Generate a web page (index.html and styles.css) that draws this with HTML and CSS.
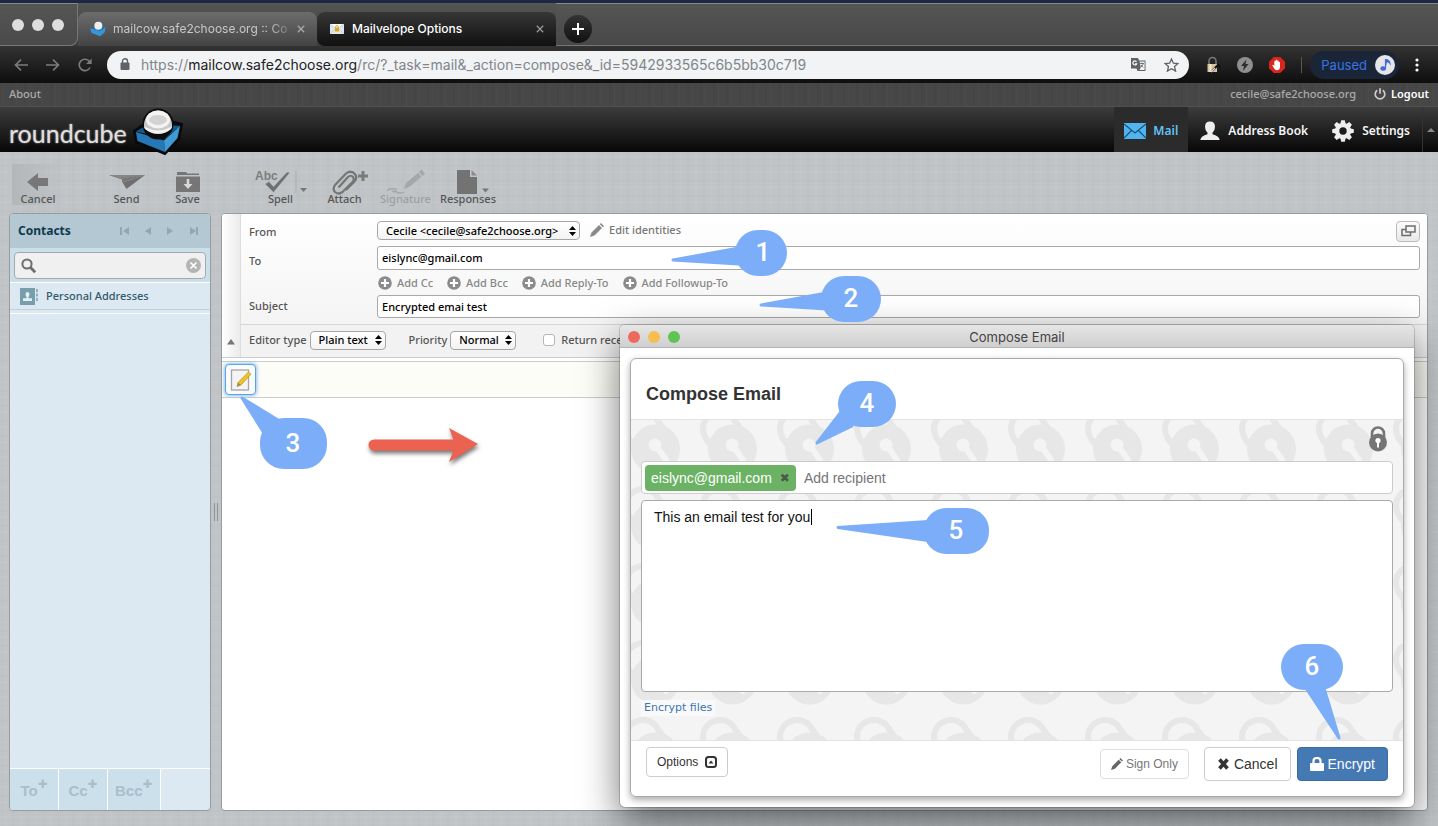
FILE: index.html
```html
<!DOCTYPE html>
<html lang="en">
<head>
<meta charset="utf-8">
<title>Roundcube compose with Mailvelope</title>
<link rel="stylesheet" href="styles.css">
</head>
<body>
<div class="screen">
  <header class="browser">
    <div class="tabstrip">
      <div class="lights"><span></span><span></span><span></span></div>
      <div class="tab tab-active">
        <svg class="fav" width="16" height="16" viewBox="0 0 48 48"><path d="M1 22L24 14 47 18 44 34 30 46 4 35z" fill="#1c6fa8"/><path d="M1 22L30 30 47 18 44 34 30 46 4 35z" fill="#3b95d2"/><circle cx="25" cy="14" r="12" fill="#eee"/></svg>
        <span class="tab-title">mailcow.safe2choose.org :: Co</span>
        <button class="tab-x" aria-label="Close tab"><svg width="8" height="8" viewBox="0 0 10 10"><path d="M1 1l8 8M9 1l-8 8" stroke="#aaa" stroke-width="1.6"/></svg></button>
      </div>
      <div class="tab tab-dark">
        <svg class="fav" width="16" height="16" viewBox="0 0 16 16"><path d="M1 3h14v10H1z" fill="#dfe7f0"/><path d="M1 3l7 5 7-5" fill="#fff" stroke="#b9c4d2" stroke-width=".7"/><path d="M1 13l5-5M15 13l-5-5" stroke="#b9c4d2" stroke-width=".7"/><rect x="6" y="6.500" width="4" height="4" fill="#e0a81c"/><path d="M6.700 6.500V5.300q1.300-1.500 2.600 0v1.200" stroke="#d9a400" fill="none"/></svg>
        <span class="tab-title">Mailvelope Options</span>
        <button class="tab-x" aria-label="Close tab"><svg width="8" height="8" viewBox="0 0 10 10"><path d="M1 1l8 8M9 1l-8 8" stroke="#999" stroke-width="1.600"/></svg></button>
      </div>
      <div class="strip-end"><button class="newtab" aria-label="New tab"><svg width="12" height="12" viewBox="0 0 12 12"><path d="M6 0v12M0 6h12" stroke="#fff" stroke-width="2"/></svg></button></div>
    </div>
    <div class="navrow">
      <div class="navbtns">
        <button aria-label="Back"><svg width="14" height="12" viewBox="0 0 14 12"><path d="M14 6H1.500M7 .7L1.500 6 7 11.300" fill="none" stroke="#7c7c7c" stroke-width="1.600"/></svg></button>
        <button aria-label="Forward"><svg width="14" height="12" viewBox="0 0 14 12"><path d="M0 6h12.500M7 .7L12.500 6 7 11.300" fill="none" stroke="#7c7c7c" stroke-width="1.600"/></svg></button>
        <button aria-label="Reload"><svg width="14" height="14" viewBox="0 0 14 14"><path d="M12 9.500A5.700 5.700 0 1 1 11.500 3.500" fill="none" stroke="#7c7c7c" stroke-width="1.600"/><path d="M13.700.5v5.600H8.100z" fill="#7c7c7c"/></svg></button>
      </div>
      <div class="omnibox">
        <svg width="10" height="13" viewBox="0 0 10 13"><rect x=".5" y="4.500" width="9" height="7.500" rx="1" fill="#5f6368"/><path d="M2.500 5V3.200a2.500 2.500 0 0 1 5 0V5" fill="none" stroke="#5f6368" stroke-width="1.400"/></svg>
        <span class="url">https://<b>mailcow.safe2choose.org</b>/rc/?_task=mail&amp;_action=compose&amp;_id=5942933565c6b5bb30c719</span>
        <svg width="15" height="15" viewBox="0 0 15 15"><path d="M0 1h7l1 2.500h6.500V14H6.500L5.500 11.500H0z" fill="#5f6368"/><path d="M8.600 4.500h5V13H8.300l1.500-2.200z" fill="#f1f3f4"/><path d="M5.500 4.800A2 2 0 1 0 5.700 6.800H4" fill="none" stroke="#fff" stroke-width="1.200"/><path d="M9 6.500h4M11 5.500v1M12.300 6.500q-.7 2.500-2.300 3.500M10 8l2.300 2.200" stroke="#5f6368" stroke-width=".8" fill="none"/></svg>
        <svg width="15" height="14" viewBox="0 0 15 14"><path d="M7.500 1l1.900 4.200 4.600.4-3.500 3 1.100 4.500-4.100-2.400-4.100 2.400 1.100-4.500-3.500-3 4.600-.4z" fill="none" stroke="#5f6368" stroke-width="1.300"/></svg>
      </div>
      <div class="exts">
        <svg width="16" height="18" viewBox="0 0 16 18"><path d="M4 8V5a3.500 3.500 0 0 1 7 0v3" fill="none" stroke="#777" stroke-width="1.600"/><rect x="2.500" y="8" width="9.500" height="8" fill="#d8c39a"/><path d="M4.500 8h2v8h-2z" fill="#f2e6c9"/><path d="M7 15l6-6 2.500 2.500" stroke="#111" stroke-width="2" fill="none"/><path d="M6 16l4-4" stroke="#ddd" stroke-width="1.500"/></svg>
        <svg width="16" height="16" viewBox="0 0 16 16"><circle cx="8" cy="8" r="8" fill="#8f8f8f"/><path d="M9.500 2.500L4 9h3l-1 5 5.500-7h-3z" fill="#2c2c2c"/></svg>
        <svg width="16" height="16" viewBox="0 0 16 16"><path d="M4.700 0h6.600L16 4.700v6.600L11.300 16H4.700L0 11.300V4.700z" fill="#d9261c"/><path d="M4 7.800l1.300 1V4.300q.7-.9 1.300 0V3q.8-.9 1.500 0v.8q.8-.8 1.500 0v1.400q.8-.7 1.400 0V10q-.3 3.200-3 3.200-2.200 0-3-2L3.300 8.500q.2-.9.700-.7z" fill="#fff"/></svg>
        <i class="vbar"></i>
        <span class="paused">Paused <svg width="20" height="20" viewBox="0 0 20 20"><circle cx="10" cy="10" r="10" fill="#e6e6e8"/><path d="M10.500 13.500V4.500q4 0 4.500 4-1.500-2-3-1.500" fill="#4469d8" stroke="#4469d8" stroke-width="1.200"/><ellipse cx="8.200" cy="13.500" rx="2.800" ry="2.200" fill="#4469d8"/></svg></span>
        <svg width="4" height="14" viewBox="0 0 4 14"><circle cx="2" cy="2" r="1.600" fill="#fff"/><circle cx="2" cy="7" r="1.600" fill="#fff"/><circle cx="2" cy="12" r="1.600" fill="#fff"/></svg>
      </div>
    </div>
  </header>

  <div class="topline">
    <a class="about" href="#">About</a>
    <span class="user">cecile@safe2choose.org</span>
    <a class="logout" href="#"><svg width="12" height="12" viewBox="0 0 12 12"><path d="M3.200 2.200a4.800 4.800 0 1 0 5.600 0M6 .2v5.600" fill="none" stroke="#ccc" stroke-width="1.700"/></svg>Logout</a>
  </div>
  <div class="topnav">
    <div class="logo"><span>roundcube</span>
      <svg width="50" height="48" viewBox="0 0 50 48"><path d="M1 23L14 14 37 13 49 16 46 31 32 46 3 34z" fill="#0d1013" stroke="#07090b" stroke-width="2"/><path d="M3 23.500L16 16 47 18 33 30z" fill="#155a8c"/><path d="M3 24l28 8.500 1 11.500L4.500 33z" fill="#2678b4"/><path d="M31 32.500L47 18l-2.500 12L32 44z" fill="#3f9ad6"/><circle cx="25" cy="16" r="15.500" fill="#0b0c0d"/><path d="M11 17a14 14.500 0 0 1 28 0v3q-6 6-14 6t-14-6z" fill="#c9c9c9"/><ellipse cx="25" cy="11.500" rx="12" ry="9" fill="#f3f3f3"/><path d="M16 13q0-6 9-6t9 6q-4 4-9 4t-9-4z" fill="#d2d2d2"/><path d="M12 19q13 7 26 0v2q-12 9-26 0z" fill="#f4f4f4"/></svg>
    </div>
    <nav class="tasks">
      <a href="#" class="task on"><svg width="22" height="16" viewBox="0 0 22 16"><rect width="22" height="16" fill="#4fb4f0"/><path d="M0 1l11 9L22 1M0 15l7.500-7.500M22 15l-7.500-7.500" fill="none" stroke="#1c4f70" stroke-width="1.200"/></svg>Mail</a>
      <a href="#" class="task"><svg width="20" height="20" viewBox="0 0 20 20"><path d="M10 .5q5 0 5 5.200 0 4-2.500 6v1.600q6.500 1.500 7.200 5.700H.3q.7-4.200 7.200-5.700v-1.600Q5 9.700 5 5.700 5 .5 10 .5z" fill="#eee"/></svg>Address Book</a>
      <a href="#" class="task"><svg width="22" height="22" viewBox="-11 -11 22 22"><g fill="#eee"><circle r="8"/><path id="cog" d="M-1.800-10.800h3.600l.9 4h-5.400zM-1.800 10.800h3.600l.9-4h-5.400z"/><use href="#cog" transform="rotate(45)"/><use href="#cog" transform="rotate(90)"/><use href="#cog" transform="rotate(135)"/></g><circle r="3.700" fill="#1d1d1d"/></svg>Settings</a>
      <button class="collapse" aria-label="Collapse"><svg width="8" height="4" viewBox="0 0 8 4"><path d="M0 4l4-4 4 4z" fill="#888"/></svg></button>
    </nav>
  </div>

  <main class="page">
    <div class="toolbar">
      <button class="tool back"><span class="ico"><svg width="22" height="20" viewBox="0 0 22 20"><path d="M0 10L11 1v5h10v8H11v5z" fill="#777"/></svg></span>Cancel</button>
      <button class="tool gap-l"><span class="ico"><svg width="36" height="18" viewBox="0 0 36 18"><path d="M0 2h36L13 9.500V6.500z" fill="#777"/><path d="M36 2L17.500 16l-4-6.500z" fill="#6f6f6f"/><path d="M0 2l36 0-24 4z" fill="#858585"/></svg></span>Send</button>
      <button class="tool"><span class="ico"><svg width="24" height="21" viewBox="0 0 24 21"><path d="M1 4V1h9l1.500 1.500H23V4zM0 5.500h24V21H0z" fill="#767676"/><path d="M10.700 8h2.600v5h3.200L12 18l-4.500-5h3.200z" fill="#d6d9db"/></svg></span>Save</button>
      <button class="tool gap-l"><span class="ico"><svg width="52" height="28" viewBox="0 0 52 28"><text x="0" y="12" class="abc">Abc</text><path d="M10 16l4-2.500 4.500 5L32 4l3 .5L18.500 24.500z" fill="#6f6f6f" stroke="#c0c4c7" stroke-width=".6"/><path d="M41 3v22" stroke="#aaadaf"/><path d="M45 20h7l-3.500 4z" fill="#777"/></svg></span>Spell</button>
      <button class="tool gap-s"><span class="ico right"><svg width="38" height="26" viewBox="0 0 38 26"><path d="M7.500 18.500L17 8q2.800-2.500 5 0 1.700 2.500-.5 5L11.500 23q-4 3-7.500 0-3-3.500.5-7.500L15 4.500q4.500-3.500 8.500 0 3.500 4 0 8L15 21" fill="none" stroke="#757575" stroke-width="2.200"/><path d="M32 2v10M27 7h10" stroke="#7b7b7b" stroke-width="3"/></svg></span>Attach</button>
      <button class="tool" disabled><span class="ico"><svg width="38" height="26" viewBox="0 0 38 26"><g fill="#a4a7a9"><path d="M17 20l2-6L31 4l3.500 3.500-11.500 10zM32 3l2.500-2.500 3.500 4L35.500 7z"/></g><path d="M1 22q0-3 5-2 3-1 3 1-1 3-4 1M9 23q5 2 8 0" fill="none" stroke="#a4a7a9" stroke-width="1.500"/></svg></span>Signature</button>
      <button class="tool wide"><span class="ico right"><svg width="33" height="24" viewBox="0 0 33 24"><path d="M0 0h13v7h7v17H0z" fill="#737373"/><path d="M14.500 0l5.500 5.500h-5.500z" fill="#8b8b8b"/><path d="M25 18.500h7l-3.500 4z" fill="#777"/></svg></span>Responses</button>
    </div>

    <div class="columns">
      <aside class="contacts">
        <div class="c-head"><h2>Contacts</h2>
          <svg width="80" height="10" viewBox="0 0 80 10" fill="#90a8b4"><path d="M0 1h2v8H0zM9 1v8L3 5zM31 1v8L25 5zM47 1v8l6-4zM70 1v8l6-4zM76 1h2v8h-2z"/></svg>
        </div>
        <div class="c-search"><label class="sbox"><svg width="16" height="16" viewBox="0 0 16 16"><circle cx="6" cy="6" r="4.600" fill="none" stroke="#6d6d6d" stroke-width="2"/><path d="M9.500 9.500l4.700 4.700" stroke="#6d6d6d" stroke-width="2.800"/></svg><input type="text" aria-label="Search contacts"><svg width="15" height="15" viewBox="0 0 15 15"><circle cx="7.500" cy="7.500" r="7.500" fill="#b4b4b4"/><path d="M4.500 4.500l6 6M10.500 4.500l-6 6" stroke="#fff" stroke-width="1.700"/></svg></label></div>
        <a class="c-row" href="#"><svg width="19" height="17" viewBox="0 0 19 17"><path d="M0 0h15v17H0z" fill="#769eab"/><path d="M7.500 4q2 0 2 2.200 0 1.800-1 2.600v1.400h3.500V13h-9v-2.800h3.500V8.800q-1-.8-1-2.600Q5.500 4 7.500 4z" fill="#e3eff5"/><path d="M16 1h2v3h-2zM16 5.500h2v3h-2zM16 10h2v3h-2z" fill="#8fb1bd"/></svg>Personal Addresses</a>
        <div class="c-space"></div>
        <div class="c-foot"><button>To<sup>+</sup></button><button>Cc<sup>+</sup></button><button>Bcc<sup>+</sup></button></div>
      </aside>
      <div class="grip"></div>

      <section class="compose">
        <form class="headers">
          <div class="strip"><svg width="8" height="6" viewBox="0 0 8 6"><path d="M0 5.500L4 0l4 5.500z" fill="#777"/></svg></div>
          <div class="fields">
            <div class="grid">
              <label class="lab" for="from">From</label>
              <div class="fromrow"><span class="sel"><select id="from"><option>Cecile &lt;cecile@safe2choose.org&gt;</option></select><svg width="7" height="10" viewBox="0 0 7 10"><path d="M0 4l3.500-4L7 4zM0 6l3.500 4L7 6z"/></svg></span>
                <a href="#" class="edit"><svg width="14" height="14" viewBox="0 0 14 14"><path d="M0 14l1.500-4.500L9 2l3 3-7.500 7.500zM9.800 1.200L11 0l3 3-1.200 1.200z" fill="#8a8a8a"/></svg>Edit identities</a>
                <button type="button" class="detach" aria-label="Open in new window"><svg width="15" height="13" viewBox="0 0 15 13"><path d="M5 1h9v6H5zM5 4.500H1v6h8.500V7" fill="none" stroke="#6e6e6e" stroke-width="1.500"/></svg></button></div>
              <label class="lab lab-to" for="to">To</label>
              <input class="txt to" id="to" type="text" value="eislync@gmail.com">
              <div class="adds">
                <a href="#"><svg class="plus" width="14" height="14"><use href="#plus"/></svg>Add Cc</a>
                <a href="#"><svg class="plus" width="14" height="14"><use href="#plus"/></svg>Add Bcc</a>
                <a href="#"><svg class="plus" width="14" height="14"><use href="#plus"/></svg>Add Reply-To</a>
                <a href="#"><svg class="plus" width="14" height="14"><use href="#plus"/></svg>Add Followup-To</a>
              </div>
              <label class="lab" for="subject">Subject</label>
              <input class="txt" id="subject" type="text" value="Encrypted emai test">
            </div>
            <div class="opts">
              <label for="editor">Editor type</label><span class="sel"><select id="editor"><option>Plain text</option></select><svg width="7" height="10" viewBox="0 0 7 10"><path d="M0 4l3.500-4L7 4zM0 6l3.500 4L7 6z"/></svg></span>
              <label class="prio" for="prio">Priority</label><span class="sel"><select id="prio"><option>Normal</option></select><svg width="7" height="10" viewBox="0 0 7 10"><path d="M0 4l3.500-4L7 4zM0 6l3.500 4L7 6z"/></svg></span>
              <label class="rr"><input type="checkbox">Return receipt</label>
            </div>
          </div>
        </form>
        <div class="mvbar"><button aria-label="Compose with Mailvelope"><svg width="22" height="24" viewBox="0 0 22 24"><rect x="1.500" y="2" width="17" height="20" fill="#f4f4f4" stroke="#a5a5a5" stroke-width="1.300"/><path d="M7 18.500l1-4L18.500 4l2.500 2.200L11 17z" fill="#edc325" stroke="#c39a2c" stroke-width=".8"/><path d="M7 18.500l1-4 2.800 2.600z" fill="#a08a5a"/></svg></button></div>
      </section>
    </div>
  </main>

  <section class="window">
    <div class="titlebar"><span class="dot r"></span><span class="dot y"></span><span class="dot g"></span><span class="wtitle">Compose Email</span></div>
    <div class="wbody">
      <div class="card">
        <h1>Compose Email</h1>
        <div class="secure">
          <svg class="locks" width="100%" height="100%"><defs><pattern id="locks" x="-14" y="-11" width="77" height="77" patternUnits="userSpaceOnUse"><path d="M22 42C14 33 9 28 9 19A17 17 0 0 1 41 12Q45 18 50 24" fill="none" stroke="#e7e7e7" stroke-width="6"/><circle cx="38.500" cy="40" r="24.500" fill="#e7e7e7"/><circle cx="38" cy="36" r="6.500" fill="#f4f4f4"/><path d="M40 38l9 13" stroke="#f4f4f4" stroke-width="6" stroke-linecap="round"/></pattern></defs><rect width="100%" height="100%" fill="url(#locks)"/></svg>
          <div class="lockrow"><svg width="18" height="26" viewBox="0 0 18 26"><path d="M3 12V7.500a6 6 0 0 1 12 0V12" fill="none" stroke="#757575" stroke-width="2.600"/><circle cx="9" cy="16.500" r="9" fill="#757575"/><circle cx="9" cy="14.500" r="2.600" fill="#fff"/><path d="M8 15h2v6.500H8z" fill="#fff"/></svg></div>
          <div class="rcpt"><span class="chip">eislync@gmail.com<button aria-label="Remove">✖</button></span><input type="text" placeholder="Add recipient" aria-label="Add recipient"></div>
          <div class="msg"><textarea aria-label="Message">This an email test for you</textarea><i class="caret"></i></div>
          <a class="files" href="#">Encrypt files</a>
        </div>
        <div class="foot">
          <button class="btn small">Options <svg width="12" height="12" viewBox="0 0 12 12"><rect x="1" y="1" width="10" height="10" rx="2.500" fill="none" stroke="#333" stroke-width="2"/><path d="M3.500 7.500L6 4.500l2.500 3z" fill="#333"/></svg></button>
          <button class="btn sign" disabled><svg width="12" height="12" viewBox="0 0 14 14"><path d="M0 14l1.500-4.500L9 2l3 3-7.500 7.500zM9.800 1.200L11 0l3 3-1.200 1.200z" fill="#666"/></svg> Sign Only</button>
          <button class="btn big"><svg width="13" height="12" viewBox="0 0 13 12"><path d="M2.500 1.500l8 9M10.500 1.500l-8 9" stroke="#333" stroke-width="3.600"/></svg> Cancel</button>
          <button class="btn big primary"><svg width="14" height="14" viewBox="0 0 14 14"><rect x="0" y="6" width="14" height="8" rx="1" fill="#fff"/><path d="M3.500 7V4q0-3 3.500-3t3.500 3v3" fill="none" stroke="#fff" stroke-width="2.200"/></svg> Encrypt</button>
        </div>
      </div>
    </div>
  </section>

  <svg class="notes" width="100%" height="100%">
    <defs><symbol id="plus" viewBox="0 0 14 14"><circle cx="7" cy="7" r="6.800" fill="#8b8b8b"/><path d="M7 3v8M3 7h8" stroke="#fff" stroke-width="2.200"/></symbol></defs>
    <g fill="#7badf8" stroke="#7badf8" stroke-width="3" stroke-linejoin="round">
      <path d="M673 260l66-12v16z"/><path d="M761 305l66-12v16z"/><path d="M242 398l36 22-14 13z"/><path d="M817 443l24-31 11 14z"/><path d="M838 527.500l90-6v19z"/><path d="M1339 738l-33-50h18z"/>
    </g>
    <g fill="#7badf8">
      <rect x="735" y="230" width="52" height="46" rx="23"/><rect x="821" y="276" width="60" height="46" rx="23"/><rect x="260" y="418" width="67" height="51" rx="24"/><rect x="838" y="381" width="58" height="46" rx="23"/><rect x="924" y="508" width="65" height="46" rx="22"/><rect x="1281" y="644" width="62" height="46" rx="23"/>
    </g>
    <g class="nums"><text x="763" y="261">1</text><text x="851" y="307">2</text><text x="293" y="452">3</text><text x="867" y="412">4</text><text x="956" y="539">5</text><text x="1312" y="675">6</text></g>
    <path class="arrow" d="M374 439.500h79.500L449 428l29 16-29 18 4.500-11.500H374a5.500 5.500 0 0 1 0-11z"/>
  </svg>
</div>
</body>
</html>
```
FILE: styles.css
```css
* { box-sizing: border-box; }
body { margin: 0; font: 500 11px/16px "Noto Sans", sans-serif; color: #555; }
a { color: inherit; text-decoration: none; }
button, input, select, textarea { font: inherit; color: inherit; margin: 0; }
button { border: 0; padding: 0; background: none; }
svg { flex: none; }
h1, h2 { margin: 0; }

.screen { position: relative; min-height: 100vh; display: flex; flex-direction: column; overflow: hidden; background: #c0c4c7; }

/* browser frame */
.browser { border-top: 3px solid #1d2744; background: linear-gradient(#555, #3b3b3b 42px, #151515); font-family: Inter, sans-serif; font-weight: 400; }
.tabstrip { display: flex; align-items: flex-end; height: 43px; }
.lights { display: flex; gap: 8px; width: 78px; height: 43px; padding: 15px 0 0 12px; background: linear-gradient(#555, #4a4a4a); border: solid #777; border-width: 1px 1px 1px 0; border-top-color: #888; border-bottom-right-radius: 8px; }
.lights span { width: 12px; height: 12px; border-radius: 50%; background: #dedede; }
.tab { display: flex; align-items: center; gap: 7px; width: 239px; height: 34px; padding: 0 12px; font-size: 12px; border-radius: 8px 8px 0 0; }
.tab-active { background: linear-gradient(#6c6c6c, #444); color: #c8c8c8; }
.tab-dark { background: linear-gradient(#363636, #111); color: #fff; font-weight: 500; border-radius: 8px 8px 0 8px; }
.tab-title { flex: 1; white-space: nowrap; overflow: hidden; }
.tab-active .tab-title { -webkit-mask-image: linear-gradient(90deg, #000 88%, #0003); mask-image: linear-gradient(90deg, #000 88%, #0003); }
.tab-x { display: flex; }
.strip-end { flex: 1; height: 43px; padding: 11px 8px; background: linear-gradient(#555, #484848); border: solid #777; border-width: 1px 0; border-top-color: #888; }
.newtab { width: 28px; height: 28px; border-radius: 50%; background: linear-gradient(#333, #111); display: grid; place-items: center; }
.navrow { display: flex; align-items: center; height: 37px; padding-right: 19px; background: linear-gradient(#333, #0e0e0e); }
.navbtns { display: flex; gap: 18px; width: 107px; padding-left: 14px; }
.navbtns button { display: flex; align-items: center; }
.omnibox { flex: 1; display: flex; align-items: center; gap: 18px; height: 28px; padding: 0 10px 0 13px; border-radius: 14px; background: #f1f3f4; }
.url { flex: 1; margin-left: -7px; font: 14px "Inter", sans-serif; color: #80868b; white-space: nowrap; }
.url b { font-weight: 400; color: #202124; }
.exts { display: flex; align-items: center; gap: 16px; padding-left: 16px; }
.vbar { width: 1px; height: 16px; background: #555; }
.paused { display: flex; align-items: center; gap: 8px; margin-left: -8px; height: 28px; padding: 0 4px 0 11px; border-radius: 14px; background: #1a2537; color: #3973e6; font-size: 13px; }

/* webmail header */
.topline { display: flex; align-items: center; gap: 18px; height: 23px; padding: 0 9px 1px; color: #aaa; background: repeating-linear-gradient(90deg, #fff0 0 3px, #ffffff06 3px 4px, #fff0 4px 11px, #00000009 11px 13px), #474747; }
.about { flex: 1; }
.logout { display: flex; align-items: center; gap: 5px; color: #fff; font-weight: 600; }
.topnav { display: flex; justify-content: space-between; height: 46px; border-top: 1px solid #505050; background: linear-gradient(#3c3c3c, #070707); }
.logo { display: flex; align-items: flex-start; gap: 6px; padding: 1px 0 0 9px; height: 52px; z-index: 1; color: #e0e0e0; }
.logo span { font: 25px/50px Lato, sans-serif; text-shadow: 0 0 2px #aaa; }
.tasks { display: flex; }
.task { display: flex; align-items: center; gap: 8px; padding: 2px 12px 0; color: #f4f4f4; font-size: 12px; font-weight: 600; }
.task.on { padding: 2px 10px 0; gap: 7px; background: #2b2b2b; color: #5fc3f5; }
.collapse { width: 16px; display: grid; place-items: center; border-left: 1px solid #333; }

/* page */
.page { flex: 1; display: flex; flex-direction: column; padding: 0 10px 15px 9px; background: repeating-linear-gradient(90deg, #fff0 0 5px, #ffffff0a 5px 7px, #fff0 7px 12px, #00000003 12px 15px), repeating-linear-gradient(#fff0 0 4px, #ffffff0a 4px 6px, #fff0 6px 13px, #00000003 13px 15px), #c0c4c7; }
.toolbar { display: flex; height: 61px; padding: 12px 0 8px 3px; }
.tool { width: 61px; display: flex; flex-direction: column; justify-content: flex-start; align-items: center; color: #555; white-space: nowrap; }
.tool .ico { flex: none; height: 27px; display: flex; align-items: center; padding-top: 8px; }
.tool .right { padding-left: 10px; }
.tool:disabled { color: #9c9fa1; }
.back { width: 52px; background: linear-gradient(90deg, #b4b7b9, #c0c4c700); }
.gap-l { margin-left: 32px; }
.gap-s { margin-left: 3px; }
.wide { width: 64px; }
.abc { font: bold 12px "Liberation Sans", sans-serif; fill: #7d7d7d; }
.columns { flex: 1; display: flex; }
.contacts { width: 202px; display: flex; flex-direction: column; background: #dce9f2; border: 1px solid #989c9f; border-radius: 4px; overflow: hidden; color: #39606f; }
.c-head { display: flex; align-items: center; justify-content: space-between; height: 34px; padding: 0 10px 0 8px; background: #b3c8d3; }
.c-head h2 { font-size: 12px; color: #0f3a4d; }
.c-search { padding: 4px; background: #cbdfe9; height: 35px; border-bottom: 1px solid #fff; }
.sbox { display: flex; align-items: center; height: 27px; padding: 0 4px 0 6px; background: #f0f0f0; border: 1px solid #a5a9ab; border-radius: 4px; }
.sbox input { flex: 1; min-width: 0; border: 0; background: none; }
.c-row { display: flex; align-items: center; gap: 7px; height: 27px; padding-left: 10px; border-bottom: 1px solid #bfd2dc; color: #335a69; }
.c-space { flex: 1; border-top: 1px solid #fff; margin-top: 3px; }
.c-foot { display: flex; height: 42px; border-top: 1px solid #fff; }
.c-foot button { min-width: 49px; padding: 0 7px; background: #cbe0ea; border-right: 1px solid #fff; color: #a8bfca; font: bold 15px "Liberation Sans", sans-serif; }
.c-foot sup { font: 900 17px/8px "Noto Sans", sans-serif; }
.grip { width: 10px; align-self: center; height: 18px; background: linear-gradient(90deg, transparent 3px, #8f9295 3px 4px, transparent 4px 6px, #8f9295 6px 7px, transparent 7px); }
.compose { flex: 1; display: flex; flex-direction: column; background: #fff; border: 1px solid #989c9f; border-radius: 4px; overflow: hidden; }
.headers { display: flex; border-bottom: 1px solid #ccc; }
.strip { width: 19px; background: linear-gradient(90deg, #fff, #ebebeb); border-right: 1px solid #ddd; display: flex; justify-content: center; align-items: flex-end; padding-bottom: 12px; }
.fields { flex: 1; }
.grid { display: grid; grid-template-columns: 128px 1fr; padding: 5px 7px 6px 8px; grid-template-rows: 27px 24px 25px 23px; background: linear-gradient(#fff, #f4f4f4); border-bottom: 1px solid #d5d5d5; }
.lab { color: #555; align-self: center; padding-bottom: 2px; }
.lab-to { padding: 6px 0 0; }
.fromrow { display: flex; align-items: flex-start; gap: 10px; padding-top: 2px; }
.sel { position: relative; display: inline-flex; align-items: center; }
.sel select { appearance: none; height: 19px; padding: 0 16px 0 8px; border: 1px solid #a6a6a6; border-radius: 4px; background: linear-gradient(#fff, #f3f3f3); color: #000; line-height: 16px; }
.sel svg { position: absolute; right: 4px; pointer-events: none; }
#from { padding-right: 20px; }
.edit { display: flex; align-items: center; gap: 5px; height: 17px; color: #777; }
.detach { margin-left: auto; width: 24px; height: 21px; display: grid; place-items: center; border: 1px solid #bbb; border-radius: 4px; background: linear-gradient(#fcfcfc, #e8e8e8); }
.txt { width: 100%; padding: 0 4px; border: 1px solid #a8a8a8; border-radius: 3px; background: #fff; color: #000; }
.adds { grid-column: 2; display: flex; align-items: center; gap: 14px; padding-left: 1px; color: #888; }
.adds a { display: flex; align-items: center; gap: 5px; }
.opts { display: flex; align-items: center; gap: 3px; height: 32px; padding: 0 0 2px 8px; background: #f2f2f2; }
.prio { margin-left: 20px; }
.rr { display: flex; align-items: center; gap: 6px; margin-left: 24px; }
.rr input { appearance: none; width: 12px; height: 12px; border: 1px solid #b5b5b5; border-radius: 3px; background: #fff; }
.mvbar { margin-top: 3px; height: 37px; padding: 2px 3px; background: #fdfdf7; border: solid #ccc; border-width: 1px 0; }
.mvbar button { width: 31px; height: 31px; display: grid; place-items: center; border: 1px solid #5aa3e8; border-radius: 4px; background: #fbfbfb; box-shadow: 0 0 4px #5aa3e8; }

/* floating compose window */
.window { position: absolute; left: 620px; right: 24px; top: 325px; bottom: 19px; display: flex; flex-direction: column; border-radius: 5px; background: #fff; box-shadow: 0 0 0 1px #0000002a, 0 14px 38px #0000008c; font-family: "Liberation Sans", sans-serif; font-weight: 400; }
.titlebar { display: flex; align-items: center; gap: 8px; height: 23px; padding: 1px 0 0 8px; border-bottom: 1px solid #b4b4b4; border-radius: 5px 5px 0 0; background: linear-gradient(#e6e6e6, #cfcfcf); }
.dot { width: 12px; height: 12px; border-radius: 50%; }
.r { background: #ee6a5f; }
.y { background: #f5be4f; }
.g { background: #5fc454; }
.wtitle { flex: 1; padding-right: 68px; text-align: center; font: 13px/16px Inter, sans-serif; color: #444; }
.wbody { flex: 1; display: flex; padding: 10px; }
.card { flex: 1; display: flex; flex-direction: column; border: 1px solid #aaa; border-radius: 6px; box-shadow: 0 3px 7px #00000055; overflow: hidden; }
.card h1 { padding: 24px 15px 13px; font-size: 18px; line-height: 23px; font-weight: 700; color: #333; }
.secure { position: relative; flex: 1; display: flex; flex-direction: column; padding: 6px 10px 24px; border: solid #e4e4e4; border-width: 1px 0; background: #f4f4f4; }
.locks { position: absolute; left: 0; top: 0; }
.secure > div, .files { position: relative; }
.lockrow { display: flex; justify-content: flex-end; height: 35px; padding-right: 6px; }
.rcpt { display: flex; align-items: center; height: 33px; padding: 3px; background: #fff; border: 1px solid #ccc; border-radius: 4px; font-size: 14px; }
.chip { display: flex; align-items: center; gap: 8px; height: 26px; padding: 0 6px; border-radius: 4px; background: #6cb264; color: #fff; }
.chip button { font: 12px "DejaVu Sans", sans-serif; color: #4a5a48; }
.rcpt input { flex: 1; border: 0; padding: 0 8px; outline: 0; }
.msg { flex: 1; display: flex; margin-top: 6px; }
.msg textarea { flex: 1; resize: none; padding: 7px 12px; border: 1px solid #aaa; border-radius: 4px; background: #fff; color: #111; font-size: 14px; line-height: 18px; }
.caret { position: absolute; left: 170px; top: 9px; width: 1px; height: 16px; background: #000; }
.files { align-self: flex-start; margin-top: 8px; padding: 0 3px; font: 11px/16px "DejaVu Sans", sans-serif; color: #3d76b4; background: #f9f9f9; }
.foot { display: flex; align-items: flex-start; gap: 6px; padding: 6px 15px 15px; }
.btn { display: flex; align-items: center; justify-content: center; gap: 6px; border: 1px solid #ccc; border-radius: 4px; background: #fff; color: #333; }
.small { height: 30px; padding: 0 10px; font-size: 12px; gap: 7px; margin-right: auto; }
.sign { height: 30px; padding: 0 10px; gap: 3px; margin: 2px 9px 0 0; font-size: 12px; color: #777; border-color: #ddd; }
.big { height: 34px; padding: 0 12px; gap: 4px; font-size: 14px; }
.primary { background: #4479b3; border-color: #3a6da6; color: #fff; }

/* numbered callouts */
.notes { position: absolute; left: 0; top: 0; pointer-events: none; }
.nums { font: 500 26px Roboto, sans-serif; fill: #fff; text-anchor: middle; }
.arrow { fill: #ec6250; filter: drop-shadow(1px 3px 2px #0008); }
```
